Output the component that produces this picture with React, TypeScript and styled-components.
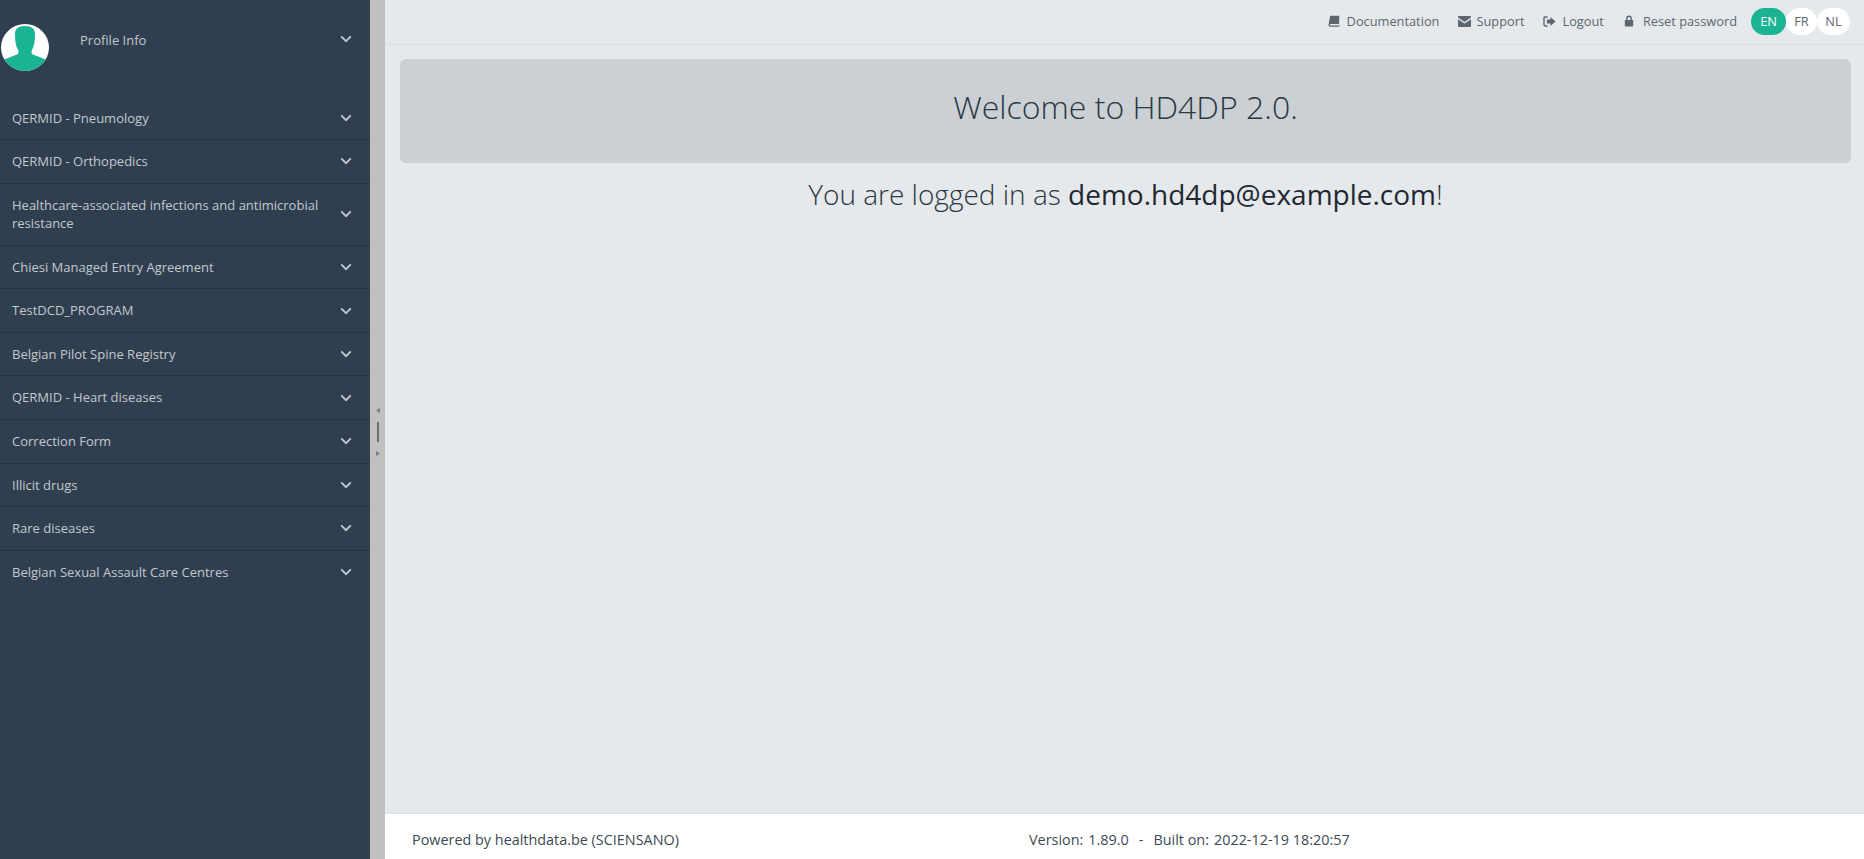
import React from "react";
import styled, { createGlobalStyle } from "styled-components";

const Global = createGlobalStyle`
  html, body { margin: 0; padding: 0; height: 100%; overflow: hidden; }
  body { font-family: "Open Sans", "Liberation Sans", sans-serif; font-size: 13px; line-height: 1.42857; color: #3d4a55; }
`;

const Page = styled.div`
  display: flex;
  width: 1864px;
  height: 859px;
  background: #e5e9ec;
`;

const Sidebar = styled.aside`
  width: 370px;
  flex: none;
  background: #2f3f50;
  color: #c3c8cc;
`;

const ProfileRow = styled.div`
  display: flex;
  align-items: flex-start;
  height: 96.5px;
  box-sizing: border-box;
  padding: 24px 18px 0 1px;
`;

const ProfileLabel = styled.span`
  margin-left: 31px;
  margin-top: 6.5px;
  flex: 1;
`;

const ProfileChevron = styled.span`
  display: flex;
  margin-top: 11px;
`;

const MenuItem = styled.div`
  display: flex;
  align-items: center;
  padding: 12px 18px 12px 12px;
  border-bottom: 1px solid #263442;
  &:last-child { border-bottom: none; }
`;

const MenuLabel = styled.span`
  flex: 1;
  padding-right: 16px;
`;

const Splitter = styled.div`
  width: 15px;
  flex: none;
  background: #c0c0c0;
  display: flex;
  flex-direction: column;
  align-items: center;
  justify-content: center;
  gap: 9px;
  padding-top: 4px;
`;

const Handle = styled.div`
  width: 2px;
  height: 20px;
  background: #6e6e6e;
`;

const Main = styled.main`
  flex: 1;
  min-width: 0;
  display: flex;
  flex-direction: column;
`;

const TopBar = styled.header`
  height: 45px;
  box-sizing: border-box;
  border-bottom: 1px solid #dadfe3;
  display: flex;
  align-items: center;
  justify-content: flex-end;
  padding: 0 14px 1px 0;
  font-size: 12.8px;
  color: #5d6770;
`;

const TopLink = styled.a<{ $gap?: number; $ml?: number }>`
  display: flex;
  align-items: center;
  gap: ${(p) => p.$gap ?? 5}px;
  margin-left: ${(p) => p.$ml ?? 19}px;
`;

const LangGroup = styled.div`
  display: flex;
  margin-left: 14px;
`;

const LangButton = styled.button<{ $active?: boolean; $width: number }>`
  font: inherit;
  font-size: 12.8px;
  border: none;
  padding: 0;
  height: 27px;
  width: ${(p) => p.$width}px;
  border-radius: 14px;
  background: ${(p) => (p.$active ? "#1ab394" : "#fff")};
  color: ${(p) => (p.$active ? "#fff" : "#5d6770")};
`;

const Content = styled.section`
  flex: 1;
  padding: 14px 13px 0 15px;
`;

const Jumbotron = styled.div`
  height: 104px;
  box-sizing: border-box;
  padding-bottom: 8px;
  border-radius: 6px;
  background: #cbd0d4;
  display: flex;
  align-items: center;
  justify-content: center;
`;

const Welcome = styled.h1`
  margin: 0;
  font-size: 32px;
  font-weight: 300;
  line-height: 1.1;
  color: #2b3742;
`;

const LoggedIn = styled.p`
  margin: 13px 0 0;
  text-align: center;
  font-size: 28px;
  font-weight: 300;
  line-height: 1.3;
  color: #2b3742;
`;

const Email = styled.span`
  font-weight: 400;
  color: #1f2830;
`;

const Footer = styled.footer`
  height: 46px;
  box-sizing: border-box;
  background: #fff;
  border-top: 1px solid #dde1e4;
  display: flex;
  align-items: center;
  padding: 8px 0 0 27px;
  color: #3d4a55;
  font-size: 14.4px;
`;

const FooterLeft = styled.span`
  width: 617px;
`;

const FooterLabel = styled.span`
  margin-right: 5px;
`;

const FooterDash = styled.span`
  margin: 0 10px;
`;

const Chevron = () => (
  <svg width="12" height="8" viewBox="0 0 12 8" fill="none">
    <path d="M1.200 1.400 6 6.200l4.800-4.800" stroke="#c3c8cc" strokeWidth="1.900" />
  </svg>
);

const Avatar = () => (
  <svg width="48" height="47" viewBox="0 0 48 47">
    <defs>
      <clipPath id="avatar-clip"><ellipse cx="24" cy="23.500" rx="24" ry="23.500" /></clipPath>
    </defs>
    <ellipse cx="24" cy="23.500" rx="24" ry="23.500" fill="#fff" />
    <g clipPath="url(#avatar-clip)" fill="#1ab394">
      <path d="M14 10c0-5 3-8 10-8s10 3 10 8c0 6-.5 12-3 16-.8 1.500-.8 3.500 1 4.500l14 5.500v14H2V36l14-5.500c1.800-1 1.800-3 1-4.500-2.500-4-3-10-3-16Z" />
    </g>
  </svg>
);

const BookIcon = () => (
  <svg width="12" height="12" viewBox="0 0 12 12" fill="#5d6770">
    <path d="M3 .8h8.300l-.3 8.200H2.800c-.8 0-1 .4-1 .7 0 .4.300.7 1 .7h8l.7-1v1.500l-.7.9H2.500C1.200 11.800.4 11 .5 9.800L2 1.700C2.100 1.100 2.500.8 3 .8Z" />
  </svg>
);

const MailIcon = () => (
  <svg width="13" height="11" viewBox="0 0 13 11" fill="#5d6770">
    <path d="M0 1.200C0 .5.500 0 1.200 0h10.600c.7 0 1.200.5 1.200 1.200v.4L6.500 6 0 1.600v-.4Z" />
    <path d="M0 3.200 6.500 7.600 13 3.200v6.600c0 .7-.5 1.200-1.200 1.200H1.200C.5 11 0 10.500 0 9.800V3.200Z" />
  </svg>
);

const LogoutIcon = () => (
  <svg width="13" height="11" viewBox="0 0 13 11" fill="#5d6770">
    <path d="M4.500 1H2.200C1.500 1 1 1.500 1 2.200v6.600C1 9.500 1.500 10 2.200 10h2.300" fill="none" stroke="#5d6770" strokeWidth="1.400" />
    <path d="M7.500 1 12.500 5.500 7.500 10V7.500H4v-4h3.500V1Z" />
  </svg>
);

const LockIcon = () => (
  <svg width="10" height="12" viewBox="0 0 10 12" fill="#5d6770">
    <path d="M2.800 5V3.500a2.200 2.200 0 0 1 4.400 0V5" fill="none" stroke="#5d6770" strokeWidth="1.400" />
    <rect x=".8" y="5" width="8.400" height="6.500" rx=".8" />
  </svg>
);

const ArrowLeft = () => (
  <svg width="4" height="5" viewBox="0 0 4 5"><path d="M4 0v5L0 2.500Z" fill="#77808a" /></svg>
);

const ArrowRight = () => (
  <svg width="4" height="5" viewBox="0 0 4 5"><path d="M0 0v5l4-2.500Z" fill="#77808a" /></svg>
);

const menu = [
  "QERMID - Pneumology",
  "QERMID - Orthopedics",
  "Healthcare-associated infections and antimicrobial resistance",
  "Chiesi Managed Entry Agreement",
  "TestDCD_PROGRAM",
  "Belgian Pilot Spine Registry",
  "QERMID - Heart diseases",
  "Correction Form",
  "Illicit drugs",
  "Rare diseases",
  "Belgian Sexual Assault Care Centres",
];

export default function App() {
  return (
    <Page>
      <Global />
      <Sidebar>
        <ProfileRow>
          <Avatar />
          <ProfileLabel>Profile Info</ProfileLabel>
          <ProfileChevron><Chevron /></ProfileChevron>
        </ProfileRow>
        {menu.map((m) => (
          <MenuItem key={m}>
            <MenuLabel>{m}</MenuLabel>
            <Chevron />
          </MenuItem>
        ))}
      </Sidebar>
      <Splitter>
        <ArrowLeft />
        <Handle />
        <ArrowRight />
      </Splitter>
      <Main>
        <TopBar>
          <TopLink $gap={7}><BookIcon />Documentation</TopLink>
          <TopLink><MailIcon />Support</TopLink>
          <TopLink $gap={6}><LogoutIcon />Logout</TopLink>
          <TopLink $gap={9} $ml={20}><LockIcon />Reset password</TopLink>
          <LangGroup>
            <LangButton $active $width={35}>EN</LangButton>
            <LangButton $width={31}>FR</LangButton>
            <LangButton $width={33}>NL</LangButton>
          </LangGroup>
        </TopBar>
        <Content>
          <Jumbotron><Welcome>Welcome to HD4DP 2.0.</Welcome></Jumbotron>
          <LoggedIn>You are logged in as <Email>demo.hd4dp@example.com</Email>!</LoggedIn>
        </Content>
        <Footer>
          <FooterLeft>Powered by healthdata.be (SCIENSANO)</FooterLeft>
          <span>
            <FooterLabel>Version:</FooterLabel>1.89.0<FooterDash>-</FooterDash>
            <FooterLabel>Built on:</FooterLabel>2022-12-19 18:20:57
          </span>
        </Footer>
      </Main>
    </Page>
  );
}
